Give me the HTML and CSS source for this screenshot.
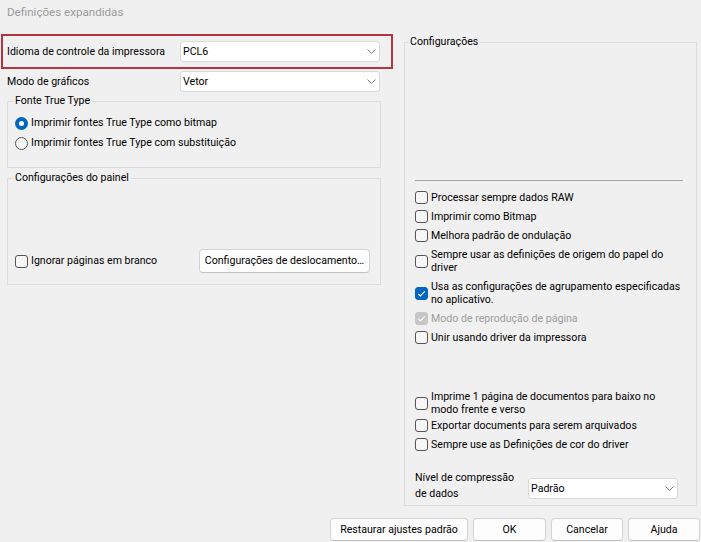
FILE: index.html
```html
<!DOCTYPE html>
<html lang="pt">
<head>
<meta charset="utf-8">
<title>Definições expandidas</title>
<link rel="stylesheet" href="styles.css">
</head>
<body>
<div class="window">
  <div class="title">Definições expandidas</div>
  <div class="main">
    <div class="left">
      <div class="row highlight">
        <span class="label">Idioma de controle da impressora</span>
        <div class="select"><span>PCL6</span><svg class="chev" width="9" height="5" viewBox="0 0 9 5"><path d="M0.5 0.5 L4.5 4.5 L8.5 0.5" fill="none" stroke="#777" stroke-width="1"/></svg></div>
      </div>
      <div class="row plain">
        <span class="label">Modo de gráficos</span>
        <div class="select"><span>Vetor</span><svg class="chev" width="9" height="5" viewBox="0 0 9 5"><path d="M0.5 0.5 L4.5 4.5 L8.5 0.5" fill="none" stroke="#777" stroke-width="1"/></svg></div>
      </div>
      <fieldset class="group group-font">
        <legend>Fonte True Type</legend>
        <div class="radio-row"><span class="radio on"></span><span>Imprimir fontes True Type como bitmap</span></div>
        <div class="radio-row"><span class="radio"></span><span>Imprimir fontes True Type com substituição</span></div>
      </fieldset>
      <fieldset class="group group-panel">
        <legend>Configurações do painel</legend>
        <div class="panel-row">
          <div class="opt"><span class="box"></span><span>Ignorar páginas em branco</span></div>
          <button class="btn btn-wide">Configurações de deslocamento…</button>
        </div>
      </fieldset>
    </div>
    <fieldset class="group group-right">
      <legend>Configurações</legend>
      <div class="sep"></div>
      <div class="list first">
        <div class="opt"><span class="box"></span><span>Processar sempre dados RAW</span></div>
        <div class="opt"><span class="box"></span><span>Imprimir como Bitmap</span></div>
        <div class="opt"><span class="box"></span><span>Melhora padrão de ondulação</span></div>
        <div class="opt"><span class="box"></span><span>Sempre usar as definições de origem do papel do<br>driver</span></div>
        <div class="opt"><span class="box on"><svg width="13" height="13" viewBox="0 0 13 13"><path d="M3.2 6.8 L5.4 9 L9.8 4.4" fill="none" stroke="#fff" stroke-width="1.1"/></svg></span><span>Usa as configurações de agrupamento especificadas<br>no aplicativo.</span></div>
        <div class="opt disabled"><span class="box dis"><svg width="13" height="13" viewBox="0 0 13 13"><path d="M3.2 6.8 L5.4 9 L9.8 4.4" fill="none" stroke="#fff" stroke-width="1.1"/></svg></span><span>Modo de reprodução de página</span></div>
        <div class="opt"><span class="box"></span><span>Unir usando driver da impressora</span></div>
      </div>
      <div class="list second">
        <div class="opt tight"><span class="box"></span><span>Imprime 1 página de documentos para baixo no<br>modo frente e verso</span></div>
        <div class="opt"><span class="box"></span><span>Exportar documents para serem arquivados</span></div>
        <div class="opt"><span class="box"></span><span>Sempre use as Definições de cor do driver</span></div>
      </div>
      <div class="compress">
        <span class="clabel">Nível de compressão<br>de dados</span>
        <div class="select small"><span>Padrão</span><svg class="chev" width="9" height="5" viewBox="0 0 9 5"><path d="M0.5 0.5 L4.5 4.5 L8.5 0.5" fill="none" stroke="#777" stroke-width="1"/></svg></div>
      </div>
    </fieldset>
  </div>
  <div class="footer">
    <button class="btn b-restore">Restaurar ajustes padrão</button>
    <button class="btn b-ok">OK</button>
    <button class="btn b-cancel">Cancelar</button>
    <button class="btn b-help">Ajuda</button>
  </div>
</div>
</body>
</html>
```
FILE: styles.css
```css
html, body {
  margin: 0;
  padding: 0;
  background: #f0f0f0;
}
body {
  font-family: Roboto, "Noto Sans", "Liberation Sans", sans-serif;
  font-size: 10.6px;
  color: #000;
  line-height: 16px;
}
.window {
  width: 701px;
  height: 542px;
  overflow: hidden;
}
.title {
  height: 34px;
  box-sizing: border-box;
  padding: 4px 0 0 7px;
  color: #9b9b9b;
  font-size: 11.6px;
}
.main {
  display: flex;
  align-items: flex-start;
  padding-left: 1px;
}
.left {
  width: 392px;
  flex: none;
}
.row {
  display: flex;
  align-items: center;
  box-sizing: border-box;
}
.label {
  flex: 1;
  white-space: nowrap;
}
.highlight {
  height: 35px;
  border: 2px solid #b5343f;
  padding: 0 11px 0 4px;
}
.plain {
  height: 21px;
  margin-top: 2px;
  padding: 0 13px 0 6px;
}
.select {
  width: 200px;
  height: 21px;
  box-sizing: border-box;
  background: #fff;
  border: 1px solid #d9d9d9;
  border-radius: 3px;
  display: flex;
  align-items: center;
  justify-content: space-between;
  padding: 0 3px 0 2px;
}
.select.small {
  width: 150px;
  margin: 8px 5px 0 0;
}
.chev {
  display: block;
}
.group {
  margin: 0;
  border: 1px solid #dcdcdc;
  min-width: 0;
  box-sizing: border-box;
}
.group legend {
  padding: 0 2px;
  line-height: 16px;
}
.group-font {
  margin: 1px 12px 0 6px;
  padding: 4px 0 14px 7px;
}
.group-font legend {
  margin-left: -2px;
}
.radio-row {
  height: 20px;
  display: flex;
  align-items: center;
  white-space: nowrap;
}
.radio {
  width: 13px;
  height: 13px;
  box-sizing: border-box;
  border-radius: 50%;
  border: 1px solid #555;
  background: #f6f6f6;
  margin-right: 3px;
  flex: none;
}
.radio.on {
  border: 4px solid #0067c0;
  background: #fff;
}
.group-panel {
  margin: 2px 12px 0 6px;
  padding: 0 10px 11px 7px;
}
.group-panel legend {
  margin-left: -2px;
}
.panel-row {
  margin-top: 63px;
  height: 24px;
  display: flex;
  align-items: center;
  justify-content: space-between;
}
.opt {
  display: flex;
  align-items: center;
  white-space: nowrap;
}
.box {
  width: 13px;
  height: 13px;
  box-sizing: border-box;
  border: 1px solid #555;
  border-radius: 3px;
  background: #f6f6f6;
  margin-right: 3px;
  flex: none;
}
.box svg {
  display: block;
  margin: -1px;
}
.box.on {
  background: #0067c0;
  border-color: #0067c0;
}
.box.dis {
  background: #c6c6c6;
  border-color: #c6c6c6;
}
.disabled {
  color: #9d9d9d;
}
.btn {
  font-family: inherit;
  font-size: 10.6px;
  color: #000;
  background: #fdfdfd;
  border: 1px solid #d3d3d3;
  border-bottom-color: #c2c2c2;
  border-radius: 4px;
  padding: 0;
  height: 23px;
  box-sizing: border-box;
  white-space: nowrap;
  line-height: 16px;
}
.btn-wide {
  width: 171px;
  height: 24px;
}
.group-right {
  margin-left: 11px;
  width: 293px;
  flex: none;
  padding: 0 13px 3px 10px;
}
.group-right legend {
  margin-left: -6px;
  padding: 0 1px;
}
.sep {
  margin-top: 130px;
  height: 1px;
  background: #a3a3a3;
}
.list .opt {
  padding: 3px 0;
  line-height: 13px;
}
.list.first {
  margin-top: 7px;
}
.list.second {
  margin-top: 40px;
}
.list .opt.tight {
  padding-bottom: 0;
}
.compress {
  margin-top: 16px;
  display: flex;
  align-items: flex-start;
  justify-content: space-between;
}
.clabel {
  white-space: nowrap;
  line-height: 16px;
}
.footer {
  display: flex;
  justify-content: flex-end;
  gap: 5px;
  padding: 12px 1px 0 0;
}
.b-restore { width: 138px; }
.b-ok { width: 73px; }
.b-cancel { width: 72px; }
.b-help { width: 72px; }
```
